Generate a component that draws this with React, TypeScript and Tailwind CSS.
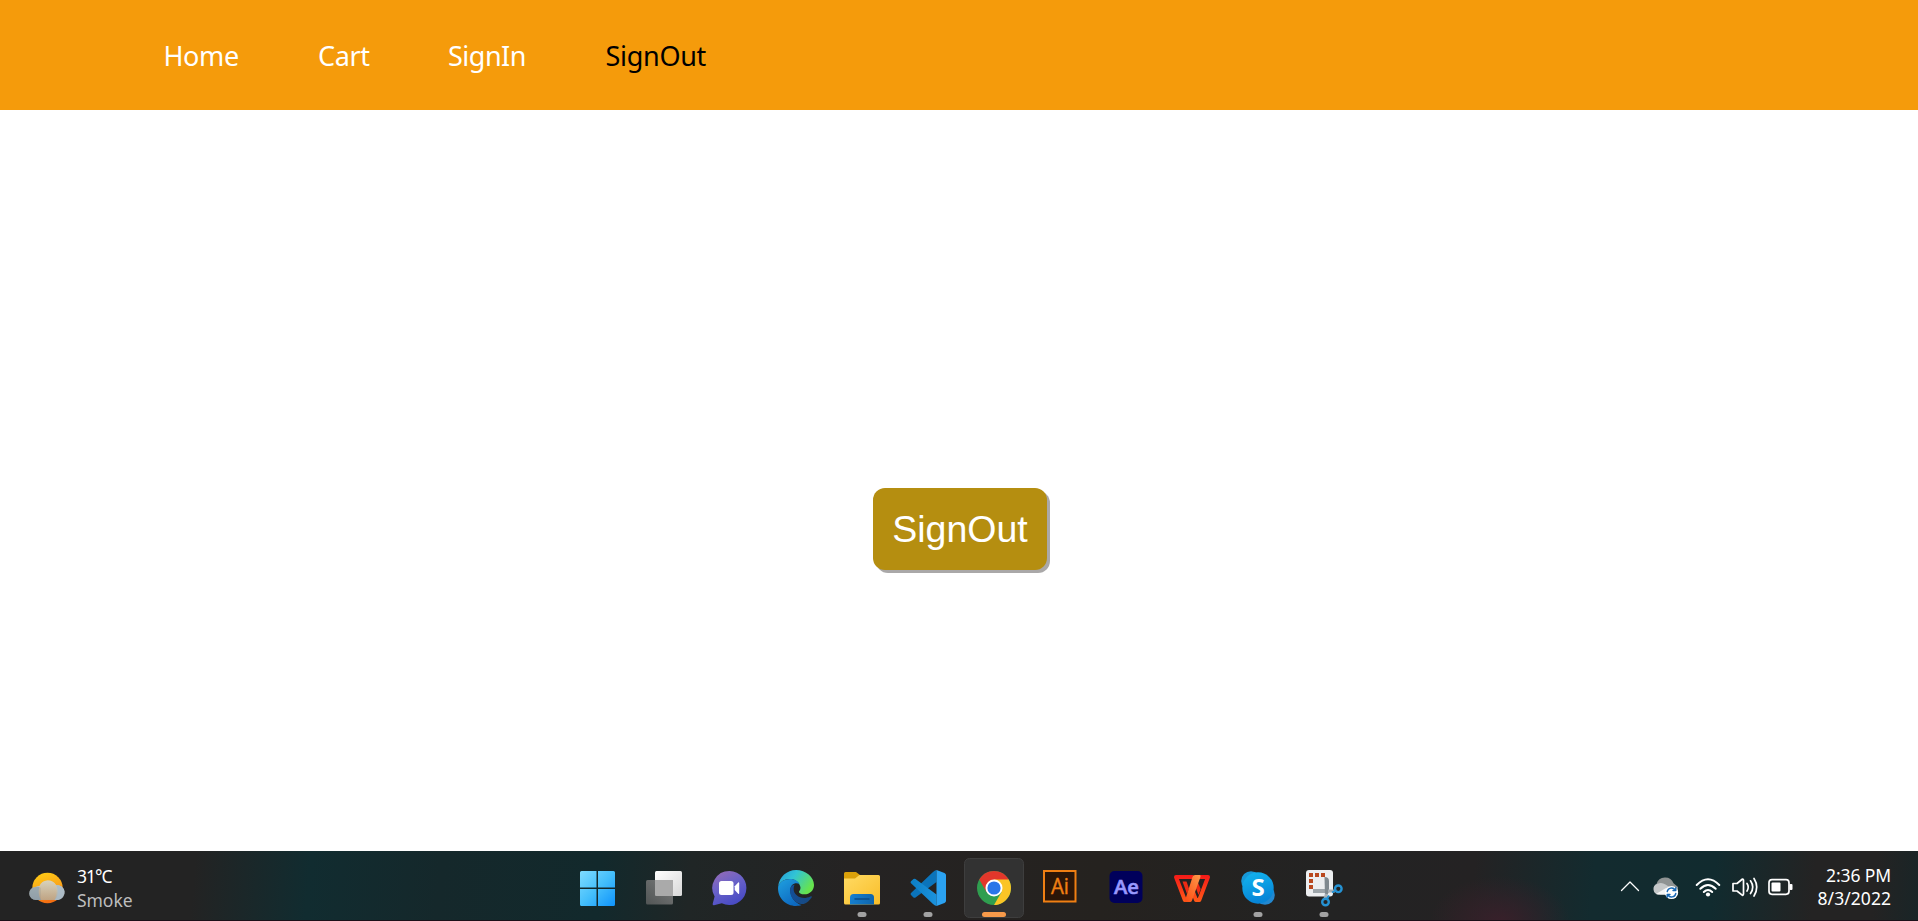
import type { ReactNode } from 'react';

const uiFont = "font-['Noto_Sans','Open_Sans',sans-serif]";

function WeatherIcon() {
  return (
    <svg width="37" height="32" viewBox="0 0 37 32">
      <defs>
        <linearGradient id="sun" x1="0" y1="0" x2="0.3" y2="1">
          <stop offset="0" stopColor="#ffd014" />
          <stop offset="0.6" stopColor="#fba51a" />
          <stop offset="1" stopColor="#f36f12" />
        </linearGradient>
        <linearGradient id="cloud" x1="0" y1="0" x2="0" y2="1">
          <stop offset="0" stopColor="#d6d6c8" />
          <stop offset="1" stopColor="#a8aaa6" />
        </linearGradient>
        <linearGradient id="warm" x1="0" y1="0" x2="0" y2="1">
          <stop offset="0" stopColor="#d8d0b5" />
          <stop offset="1" stopColor="#cf9f6c" />
        </linearGradient>
      </defs>
      <circle cx="18.500" cy="16" r="15.200" fill="url(#sun)" />
      <path d="M7 28a6.500 6.500 0 0 1-.5-13 6 6 0 0 1 4-1A9.300 9.300 0 0 1 27 13a7.500 7.500 0 0 1 2 15z" fill="url(#cloud)" />
      <path d="M7 28a6.500 6.500 0 0 1-.5-13c1.500-.5 4-.5 5.500 1v12z" fill="#8096a8" opacity=".6" />
      <path d="M27 13a7.500 7.500 0 0 1 2 15h-3.500c3.500-3 4.500-9.500 1.500-15z" fill="#a9bccb" opacity=".8" />
      <path d="M10.500 14a9.300 9.300 0 0 1 16.500-1c1.500 5.500.5 11-1.500 15H12c-2.500-4-3-9.500-1.500-14z" fill="url(#warm)" opacity=".6" />
    </svg>
  );
}

const Start = (
  <>
    <defs>
      <linearGradient id="win" gradientUnits="userSpaceOnUse" x1="16" y1="20" x2="51" y2="55">
        <stop offset="0" stopColor="#7fdcff" />
        <stop offset="0.5" stopColor="#45bffb" />
        <stop offset="1" stopColor="#0f93fb" />
      </linearGradient>
    </defs>
    <path d="M17.500 20H32.500V36.500H16V21.500Q16 20 17.500 20ZM34 20H49.500Q51 20 51 21.500V36.500H34ZM16 38H32.500V55H17.500Q16 55 16 53.500ZM34 38H51V53.500Q51 55 49.500 55H34Z" fill="url(#win)" />
  </>
);

const TaskView = (
  <>
    <defs>
      <linearGradient id="tv" x1="0" y1="0" x2="1" y2="1">
        <stop offset="0" stopColor="#ffffff" />
        <stop offset="1" stopColor="#d8d8d8" />
      </linearGradient>
      <linearGradient id="tv2" x1="1" y1="0" x2="0" y2="1">
        <stop offset="0" stopColor="#8a8a8a" />
        <stop offset="1" stopColor="#5b5d5d" />
      </linearGradient>
    </defs>
    <rect x="25" y="20" width="27" height="25" rx="1.500" fill="url(#tv)" />
    <rect x="16" y="29" width="27" height="24.500" rx="1.500" fill="url(#tv2)" opacity=".85" />
    <path d="M25 29H43V45H26.500Q25 45 25 43.500Z" fill="#aaaaaa" />
  </>
);

const Chat = (
  <>
    <defs>
      <linearGradient id="chat" x1="0" y1="0" x2="0.500" y2="1">
        <stop offset="0" stopColor="#9a6cb4" />
        <stop offset="0.500" stopColor="#6a62c8" />
        <stop offset="1" stopColor="#4a4cc4" />
      </linearGradient>
    </defs>
    <path d="M33.500 20A17 17 0 1 1 25.800 52.200L18 54.200Q16.300 54.500 16.700 52.800L18.600 45.500A17 17 0 0 1 33.500 20Z" fill="url(#chat)" />
    <rect x="23" y="30" width="14.500" height="14" rx="2.500" fill="#fff" />
    <path d="M38.700 35.300L42.200 31.500Q43.200 31 43.200 32.300V42Q43.200 43.300 42.200 42.700L38.700 39Z" fill="#fff" />
  </>
);

const Edge = (
  <>
    <defs>
      <linearGradient id="e1" x1="0" y1="0" x2="1" y2="0.500">
        <stop offset="0" stopColor="#2498dc" />
        <stop offset="0.450" stopColor="#31c4d5" />
        <stop offset="1" stopColor="#66e34e" />
      </linearGradient>
      <linearGradient id="e2" x1="0" y1="0" x2="0.600" y2="1">
        <stop offset="0" stopColor="#1fa0e0" />
        <stop offset="1" stopColor="#0d69c0" />
      </linearGradient>
      <linearGradient id="e3" x1="0" y1="0" x2="1" y2="0.500">
        <stop offset="0" stopColor="#124f9c" />
        <stop offset="1" stopColor="#174a83" />
      </linearGradient>
    </defs>
    <g transform="translate(15 19) scale(1.5)">
      <path d="M.1 11C.8 4.500 6 0 12 0c6.600 0 12 4.700 12 10 0 3.800-3 6.200-6.300 6.200-2.500 0-3.700-.9-3.700-1.600 0-.7 1-.9 1-2.700 0-2.500-2.900-5.900-7-5.900C4 6 1.300 8 .1 11z" fill="url(#e1)" />
      <path d="M.1 11C1.200 8 4 6 8 6c3.300 0 5.500 1.500 6.400 3.200-3-1.300-6.200.3-6.200 4.300 0 4.500 3 8.500 7.500 9.900C14.500 23.900 13.200 24 12 24 5.300 24-.7 18.500.1 11z" fill="url(#e2)" />
      <path d="M8.900 10.800c-2.800 5.700 2.300 12.200 8.200 11.900 2.200-.9 4-2.400 5.300-4.400.4-.6-.1-1-.8-.7-5.300 2.600-11.200-.2-11.200-5.100 0-1 .2-1.900.6-2.700-.8.200-1.500.5-2.100 1z" fill="url(#e3)" />
    </g>
  </>
);

const Folder = (
  <>
    <defs>
      <linearGradient id="fold" x1="0" y1="0" x2="1" y2="1">
        <stop offset="0" stopColor="#ffdb64" />
        <stop offset="1" stopColor="#f9bd28" />
      </linearGradient>
      <linearGradient id="tray" x1="0" y1="0" x2="1" y2="0">
        <stop offset="0" stopColor="#157fd0" />
        <stop offset="1" stopColor="#0f65ac" />
      </linearGradient>
    </defs>
    <path d="M15 22.500Q15 21 16.500 21H27L31 24H48V32H15Z" fill="#dba10a" />
    <path d="M15 27.500H26L30.500 24H49.500Q51 24 51 25.500V52Q51 53.500 49.500 53.500H16.500Q15 53.500 15 52Z" fill="url(#fold)" />
    <path d="M21 53.500V46.500Q21 43 24.500 43H41.500Q45 43 45 46.500V53.500Z" fill="url(#tray)" />
    <path d="M26 48H40" stroke="#094b88" strokeWidth="1.500" strokeLinecap="round" />
  </>
);

const Code = (
  <>
    <defs>
      <linearGradient id="code" x1="0" y1="0" x2="1" y2="0">
        <stop offset="0" stopColor="#0c7fc6" />
        <stop offset="1" stopColor="#1b92dd" />
      </linearGradient>
    </defs>
    <path d="M41.500 19V31L20.500 46.500Q19.500 47 18.500 46.500L16 44Q15 43 16 42L38 21Q39.500 19.500 41.500 19Z" fill="#0b74bb" />
    <path d="M41.500 55V43.500L20.500 28Q19.500 27.300 18.500 28L16 30.200Q15 31 16 32.200L38 53Q39.500 54.500 41.500 55Z" fill="url(#code)" />
    <path d="M41.500 19L49.500 22Q51 23 51 24V50Q51 51 49.500 52L41.500 55Z" fill="#2ba2f1" />
  </>
);

const Chrome = (
  <>
    <rect x="3.500" y="7.500" width="59" height="59" rx="5" fill="#323232" stroke="#3e3e3e" />
    <circle cx="33" cy="37" r="17" fill="#2f9e4f" />
    <path d="M33 37L18.300 28.500A17 17 0 0 1 47.700 28.500Z" fill="#e2372b" />
    <path d="M18.300 28.500L25.600 41.250L33 37V28.500Z" fill="#e2372b" />
    <path d="M33 28.500H47.700A17 17 0 0 1 33 54L40.400 41.250Z" fill="#fbc425" />
    <circle cx="33" cy="37" r="8.500" fill="#fff" />
    <circle cx="33" cy="37" r="6.600" fill="#2a76e8" />
    <rect x="21" y="61" width="24" height="5" rx="2.500" fill="#f79a4a" />
  </>
);

const Illustrator = (
  <>
    <rect x="17" y="20" width="31.500" height="30.500" fill="#2b1608" stroke="#f07f13" strokeWidth="2" />
    <text x="33" y="42.500" textAnchor="middle" fill="#f07f13" stroke="#f07f13" strokeWidth=".4" fontSize="21" textLength="18" lengthAdjust="spacingAndGlyphs" className="font-['Open_Sans',sans-serif]">Ai</text>
  </>
);

const AfterEffects = (
  <>
    <rect x="16.500" y="20" width="33" height="32" rx="5" fill="#00005b" />
    <text x="33.500" y="42.500" textAnchor="middle" fill="#9999ff" stroke="#9999ff" strokeWidth=".6" fontSize="20" fontWeight="600" textLength="25" lengthAdjust="spacingAndGlyphs" className="font-['Open_Sans',sans-serif]">Ae</text>
  </>
);

const Wps = (
  <>
    <defs>
      <linearGradient id="wps" gradientUnits="userSpaceOnUse" x1="0" y1="24" x2="0" y2="51">
        <stop offset="0" stopColor="#f51a18" />
        <stop offset="1" stopColor="#ff5a18" />
      </linearGradient>
      <linearGradient id="wps2" x1="1" y1="0" x2="0" y2="1">
        <stop offset="0" stopColor="#ff9a4a" />
        <stop offset="1" stopColor="#fb4a12" />
      </linearGradient>
    </defs>
    <g fill="none" stroke="url(#wps)" strokeWidth="4" strokeLinejoin="round">
      <path d="M34.500 26H17L25.800 49H28" />
      <path d="M39.500 26H49L40.300 49H37L33 38.500" />
    </g>
    <path d="M23.500 30.500H27.500L30 37.500L28 43Z" fill="#ee2a14" />
    <path d="M38.500 30.500L41.700 38L39.500 44L36.500 36Z" fill="#ee2a14" />
    <path d="M36 24H40.500Q42 24 41.500 25.800L33 49.500Q32.500 51 31 51H25.500L33.500 26Q34.200 24 36 24Z" fill="url(#wps2)" />
  </>
);

const Skype = (
  <>
    <defs>
      <linearGradient id="sky" x1="0" y1="0" x2="0.300" y2="1">
        <stop offset="0" stopColor="#13b6ef" />
        <stop offset="1" stopColor="#0785d7" />
      </linearGradient>
    </defs>
    <circle cx="26" cy="30" r="9.800" fill="#1798d8" />
    <circle cx="40" cy="44" r="9.800" fill="#2388d0" />
    <circle cx="33" cy="37" r="15.700" fill="url(#sky)" />
    <text x="33" y="45.200" textAnchor="middle" fill="#fff" fontSize="24" fontWeight="700" className="font-['Open_Sans',sans-serif]">S</text>
  </>
);

const Snip = (
  <>
    <rect x="15" y="19" width="27" height="26.500" rx="3" fill="#eceef0" />
    <g fill="#b9481e">
      <rect x="18" y="22" width="4" height="4" />
      <rect x="24" y="22" width="4" height="4" />
      <rect x="30" y="22" width="4" height="4" />
      <rect x="18" y="28" width="4" height="4" />
      <rect x="18" y="34" width="4" height="4" />
    </g>
    <path d="M22 40H37" stroke="#9da5aa" strokeWidth="4" />
    <path d="M33.500 26Q38 26 38 30V41L35 46H34Z" fill="#7f898f" />
    <path d="M37 40H44M35.500 43L34 48" stroke="#a8b0b5" strokeWidth="3" />
    <circle cx="47.300" cy="37.800" r="3.300" fill="none" stroke="#2592d3" strokeWidth="2.400" />
    <circle cx="34.500" cy="51" r="3.300" fill="none" stroke="#2592d3" strokeWidth="2.400" />
    <path d="M41 41.500L44.500 39.500M36 48L38 44.500" stroke="#2592d3" strokeWidth="2" />
  </>
);

type AppEntry = { name: string; icon: ReactNode; running?: boolean };

const pinned: AppEntry[] = [
  { name: 'start', icon: Start },
  { name: 'task-view', icon: TaskView },
  { name: 'chat', icon: Chat },
];

const apps: AppEntry[] = [
  { name: 'edge', icon: Edge },
  { name: 'explorer', icon: Folder, running: true },
  { name: 'code', icon: Code, running: true },
  { name: 'chrome', icon: Chrome },
  { name: 'illustrator', icon: Illustrator },
  { name: 'after-effects', icon: AfterEffects },
  { name: 'wps', icon: Wps },
  { name: 'skype', icon: Skype, running: true },
  { name: 'snip', icon: Snip, running: true },
];

function AppGroup({ items }: { items: AppEntry[] }) {
  return (
    <div className="flex">
      {items.map((app) => (
        <svg key={app.name} width="66" height="70" viewBox="0 0 66 70">
          {app.icon}
          {app.running && <rect x="28.500" y="61" width="9" height="5" rx="2.500" fill="#a2a2a2" />}
        </svg>
      ))}
    </div>
  );
}

function TrayIcons() {
  return (
    <svg width="194" height="70" viewBox="0 0 194 70" fill="none" stroke="#fff" strokeLinecap="round" strokeLinejoin="round">
      <path d="M11.500 39.500L20 31L28.500 39.500" strokeWidth="1.300" />
      <g stroke="none">
        <path d="M46.500 33a9 9 0 0 1 17-.8L68 36v7.500H50z" fill="#8f9393" />
        <path d="M49 43.500a5.500 5.500 0 0 1-1.500-10.800 8 8 0 0 1 8 .8L66 40v3.500z" fill="#c5c8c9" />
        <path d="M46 43L56 37l9 6.500H48z" fill="#f5f5f5" />
        <circle cx="61.500" cy="41.500" r="6.600" fill="#fff" />
      </g>
      <path d="M57.200 40.500A4.400 4.400 0 0 1 65.200 39M65.800 42.500A4.400 4.400 0 0 1 57.800 44M65.800 36.800V39.500H63M57.200 46.200V43.500H60" stroke="#1768b5" strokeWidth="1.400" />
      <path d="M86.700 34Q98 22.500 109.300 34M90.300 37.800Q98 30 105.700 37.800M93.800 41Q98 36.800 102.200 41" strokeWidth="2" />
      <circle cx="98" cy="43.500" r="2.100" fill="#fff" stroke="none" />
      <path d="M123 32.500H127L132.500 28Q133.500 28 133.500 29V43Q133.500 44.300 132.500 44.300L127 40H123Z" strokeWidth="1.700" />
      <path d="M137 32.500Q139.500 36.200 137 40M140.500 29.800Q145 36.200 140.500 42.500M144 27.500Q149.500 36.200 144 45" strokeWidth="1.700" />
      <rect x="159" y="28.700" width="20" height="14.600" rx="3" strokeWidth="1.700" />
      <rect x="161.500" y="31.500" width="9" height="9" rx="1" fill="#fff" stroke="none" />
      <rect x="179.500" y="33" width="3" height="6" rx="1" fill="#fff" stroke="none" />
    </svg>
  );
}

function Taskbar() {
  return (
    <footer className={`flex h-[70px] border-b border-[#1b1019] bg-[radial-gradient(70px_45px_at_1500px_70px,#38202a,transparent),linear-gradient(95deg,#232323_0px,#232323_195px,#112c30_310px,#15282b_440px,#12292c_600px,#202626_690px,#252323_850px,#25221f_1100px,#232323_1330px,#242223_1470px,#132b2f_1590px,#112b2f_1710px,#242323_1810px,#242323_1870px,#192527_1918px)] text-white ${uiFont}`}>
      <div className="flex w-[564px] pl-[29px] pt-[21px]">
        <WeatherIcon />
        <div className="-mt-2 ml-[11px] text-[17.500px] leading-6">
          <div className="tracking-[-1px]">31°C</div>
          <div className="tracking-[-0.050px] text-[#bdbdbd]">Smoke</div>
        </div>
      </div>
      <div className="flex gap-px">
        <AppGroup items={pinned} />
        <AppGroup items={apps} />
      </div>
      <div className="ml-auto flex pr-[27px]">
        <TrayIcons />
        <div className="w-[87px] pt-[13px] text-right text-[17.500px] leading-[23px]">
          <div className="tracking-[-0.1px]">2:36 PM</div>
          <div className="tracking-[0.050px]">8/3/2022</div>
        </div>
      </div>
    </footer>
  );
}

export default function App() {
  return (
    <div className="flex h-[921px] w-[1918px] flex-col overflow-hidden bg-white">
      <nav className={`flex h-[110px] items-center bg-[#f59b0b] pl-[163.500px] pt-[3px] text-[27px] text-white ${uiFont}`}>
        <a className="w-[154.500px] tracking-[-0.4px]">Home</a>
        <a className="w-[130px] tracking-[-0.4px]">Cart</a>
        <a className="w-[157.500px] tracking-[-0.5px]">SignIn</a>
        <a className="tracking-[-0.3px] text-black">SignOut</a>
      </nav>
      <main className="flex flex-1 justify-center pl-[2px] pt-[378px]">
        <button className="h-[82px] w-[174px] rounded-[12px] bg-[#b58e10] pt-px font-['Liberation_Sans',Arial,sans-serif] text-[37.500px] leading-none text-white shadow-[3px_3px_0_#aaa8a8]">
          SignOut
        </button>
      </main>
      <Taskbar />
    </div>
  );
}
